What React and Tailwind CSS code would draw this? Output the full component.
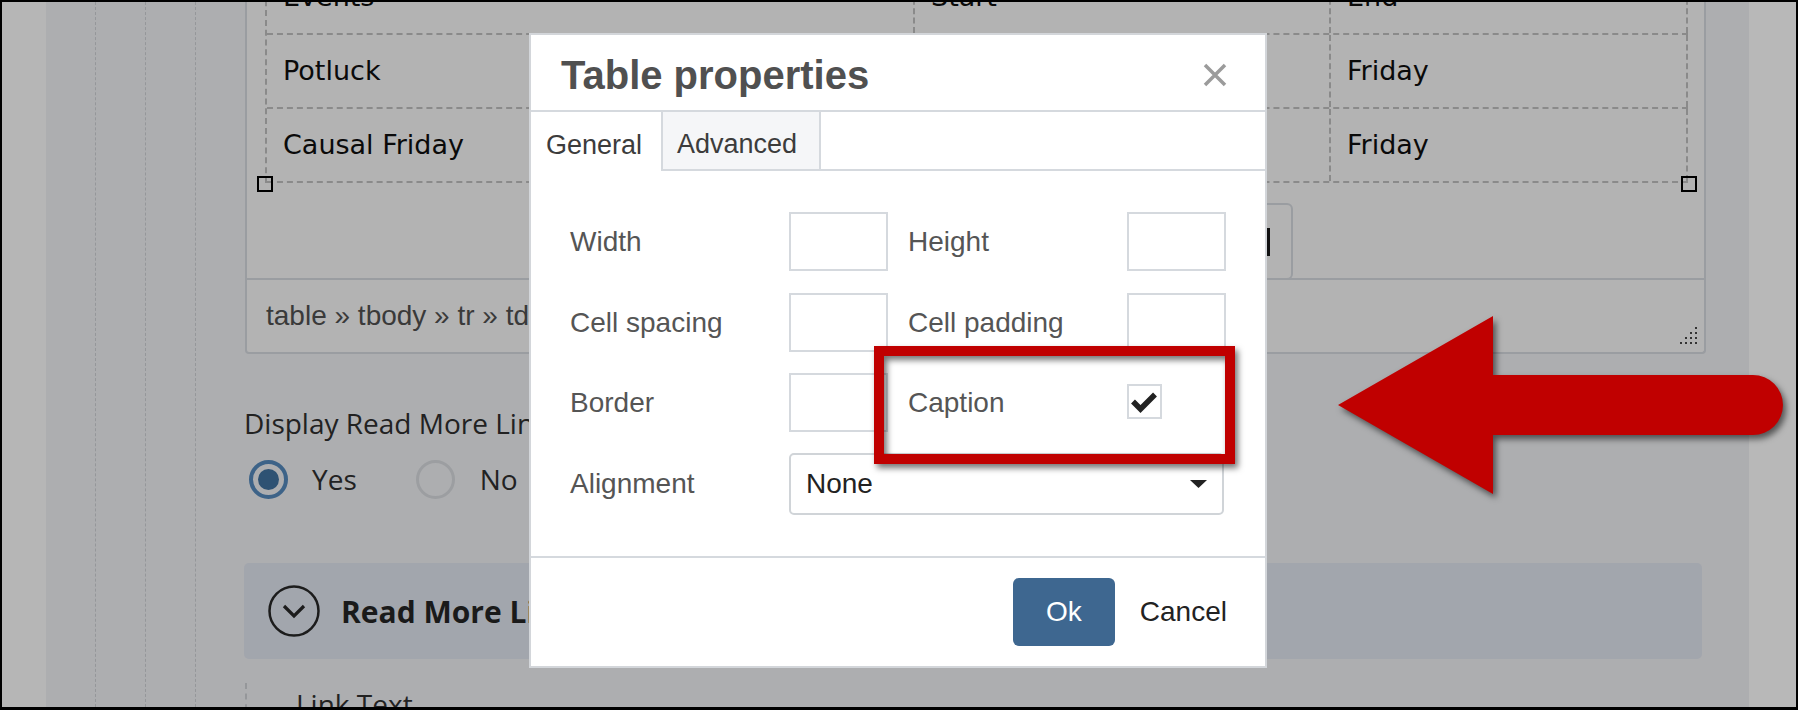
import React from "react";

const rows = [
  ["Events", "Start", "End"],
  ["Potluck", "", "Friday"],
  ["Causal Friday", "", "Friday"],
];

function Handle({ className }) {
  return <div className={"absolute w-[16px] h-[16px] border-2 border-black " + className} />;
}

function ResizeGrip() {
  const dots = [];
  for (let r = 0; r < 4; r++) {
    for (let c = 3 - r; c < 4; c++) {
      dots.push(<rect key={r + "-" + c} x={c * 5} y={r * 5} width="2" height="2" fill="#333" />);
    }
  }
  return (
    <svg width="18" height="18" viewBox="0 0 18 18" className="self-end mb-[7px] mr-[6px]">
      {dots}
    </svg>
  );
}

function Field({ label, children, labelClass = "" }) {
  return (
    <>
      <div className={"w-[219px] text-[28px] text-[#555] " + labelClass}>{label}</div>
      {children}
    </>
  );
}

function TextBox() {
  return <div className="w-[99px] h-[59px] border-2 border-[#d5d9de] bg-white" />;
}

export default function App() {
  return (
    <div className="relative w-[1798px] h-[710px] overflow-hidden border-x-2 border-t-2 border-b-[3px] border-black bg-[#b6b6b6] font-['Liberation_Sans',Arial,sans-serif]">
      <div className="flex h-full">
        <div className="w-[44px] shrink-0" />
        {/* page column */}
        <div className="flex w-[1703px] shrink-0 bg-[#adaeb0]">
          <div className="flex w-[198px] shrink-0">
            <div className="ml-[49px] h-full w-0 border-l border-dashed border-[#95979a]" />
            <div className="ml-[49px] h-full w-0 border-l border-dashed border-[#95979a]" />
            <div className="ml-[49px] h-full w-0 border-l border-dashed border-[#95979a]" />
          </div>

          <div className="flex w-[1462px] shrink-0 flex-col">
            {/* editor panel */}
            <div className="mt-[-41px] ml-[1px] shrink-0 border-x-2 border-b-2 border-[#9a9da1] rounded-b-[4px] bg-[#b3b3b3]">
              <div className="relative ml-[18px] w-[1423px] border-l-2 border-dashed border-[#8a8a8a] font-['DejaVu_Sans',sans-serif] text-[27px] text-[#0a0a0a]">
                {rows.map((row, i) => (
                  <div key={i} className="flex h-[74px] border-b-2 border-dashed border-[#8a8a8a]">
                    <div className="flex w-[648px] items-center border-r-2 border-dashed border-[#8a8a8a] pl-4">{row[0]}</div>
                    <div className="flex w-[416px] items-center border-r-2 border-dashed border-[#8a8a8a] pl-4">{row[1]}</div>
                    <div className="flex w-[357px] items-center border-r-2 border-dashed border-[#8a8a8a] pl-4">{row[2]}</div>
                  </div>
                ))}
                <Handle className="left-[-10px] bottom-[-9px]" />
                <Handle className="right-[-9px] bottom-[-9px]" />
              </div>
              <div className="flex h-[95px] justify-end pt-[20px] pr-[411px]">
                <div className="flex h-[77px] w-[420px] items-center justify-end rounded-[6px] border-2 border-[#9a9da1] pr-[21px]">
                  <div className="h-[28px] w-[3px] bg-[#111]" />
                </div>
              </div>
              <div className="relative flex h-[74px] justify-between border-t-2 border-[#9a9da1] pl-[19px]">
                <div className="flex items-center text-[28px] text-[#3a3a3a]">table » tbody » tr » td</div>
                <ResizeGrip />
              </div>
            </div>

            <div className="mt-[50px] shrink-0 font-['Open_Sans',sans-serif] text-[28px] leading-[38px] text-[#222]">
              Display Read More Link
            </div>
            <div className="mt-[17px] flex h-[40px] shrink-0 items-center font-['Open_Sans',sans-serif] text-[28px] text-[#222]">
              <div className="ml-[5px] flex h-[39px] w-[39px] items-center justify-center rounded-full border-[4px] border-[#3d6388]">
                <div className="h-[21px] w-[21px] rounded-full bg-[#2e5273]" />
              </div>
              <span className="ml-[24px]">Yes</span>
              <div className="ml-[59px] h-[39px] w-[39px] rounded-full border-[3px] border-[#9c9ea1]" />
              <span className="ml-[25px]">No</span>
            </div>

            <div className="mt-[64px] flex h-[96px] w-[1458px] shrink-0 items-center rounded-[5px] bg-[#a2a6ad] pl-[24px] font-['Open_Sans',sans-serif]">
              <svg width="52" height="52" viewBox="0 0 52 52">
                <circle cx="26" cy="26" r="24.5" fill="none" stroke="#1c1c1c" strokeWidth="2.5" />
                <path d="M16 21 L26 31 L36 21" fill="none" stroke="#1c1c1c" strokeWidth="3.2" />
              </svg>
              <span className="ml-[21px] text-[30px] font-bold text-[#1a1a1a]">Read More Link</span>
            </div>

            <div className="mt-[24px] ml-[1px] h-[80px] shrink-0 border-l-2 border-dashed border-[#95979a] pl-[49px] pt-[2px] font-['Open_Sans',sans-serif] text-[28px] leading-[38px] text-[#222]">
              Link Text
            </div>
          </div>
          <div className="flex-1" />
        </div>
        <div className="flex-1 bg-[#b8b8b8]" />
      </div>

      {/* dialog */}
      <div className="absolute left-[527px] top-[31px] flex h-[635px] w-[738px] flex-col border-2 border-[#d3d6da] bg-white">
        <div className="flex h-[77px] shrink-0 items-center justify-between border-b-2 border-[#d5d9de] pl-[30px] pr-[38px] pt-[4px]">
          <div className="text-[40px] font-bold text-[#505050]">Table properties</div>
          <svg width="24" height="24" viewBox="0 0 24 24">
            <path d="M2 2 L22 22 M22 2 L2 22" stroke="#9b9b9b" strokeWidth="3.5" />
          </svg>
        </div>
        <div className="flex h-[59px] shrink-0 text-[27px] text-[#3c3c3c]">
          <div className="flex w-[130px] items-center pl-[15px] pt-[8px]">General</div>
          <div className="flex w-[160px] items-center border-x-2 border-b-2 border-[#d5d9de] bg-[#f5f6f8] pl-[14px] pt-[8px]">Advanced</div>
          <div className="flex-1 border-b-2 border-[#d5d9de]" />
        </div>
        <div className="flex flex-1 flex-col pl-[39px] pt-[41px]">
          <div className="flex h-[59px] items-center">
            <Field label="Width"><TextBox /></Field>
            <Field label="Height" labelClass="ml-[20px]"><TextBox /></Field>
          </div>
          <div className="mt-[22px] flex h-[59px] items-center">
            <Field label="Cell spacing"><TextBox /></Field>
            <Field label="Cell padding" labelClass="ml-[20px]"><TextBox /></Field>
          </div>
          <div className="mt-[21px] flex h-[59px] items-center">
            <Field label="Border"><TextBox /></Field>
            <Field label="Caption" labelClass="ml-[20px]">
              <div className="mt-[-2px] h-[35px] w-[35px] border-2 border-[#d5d9de] bg-white">
                <svg width="31" height="31" viewBox="0 0 31 31">
                  <path d="M4 15.5 L11.5 23 L26 8.5" fill="none" stroke="#222" strokeWidth="5.5" />
                </svg>
              </div>
            </Field>
          </div>
          <div className="mt-[21px] flex h-[62px] items-center">
            <div className="w-[219px] text-[28px] text-[#555]">Alignment</div>
            <div className="flex h-[62px] w-[435px] items-center justify-between rounded-[5px] border-2 border-[#d0d4d8] pl-[15px] pr-[15px] text-[28px] text-[#222]">
              <span>None</span>
              <svg width="17" height="8" viewBox="0 0 17 8">
                <path d="M0 0 L17 0 L8.5 8 Z" fill="#222" />
              </svg>
            </div>
          </div>
        </div>
        <div className="flex h-[110px] shrink-0 items-center justify-end border-t-2 border-[#d5d9de] pr-[38px]">
          <div className="flex h-[68px] w-[102px] items-center justify-center rounded-[6px] bg-[#3e6790] text-[28px] text-white">Ok</div>
          <div className="ml-[25px] text-[28px] text-[#222]">Cancel</div>
        </div>
      </div>

      {/* callout box */}
      <div className="absolute left-[872px] top-[344px] h-[118px] w-[361px] border-[10px] border-[#c00000] [filter:drop-shadow(3px_4px_3px_rgba(0,0,0,0.55))]" />

      {/* arrow */}
      <svg className="absolute left-[1318px] top-[298px] [filter:drop-shadow(3px_4px_3px_rgba(0,0,0,0.55))]" width="478" height="210" viewBox="0 0 478 210">
        <path d="M18 105 L173 16 L173 75 L433 75 A30 30 0 0 1 433 135 L173 135 L173 194 Z" fill="#c00000" />
      </svg>
    </div>
  );
}
